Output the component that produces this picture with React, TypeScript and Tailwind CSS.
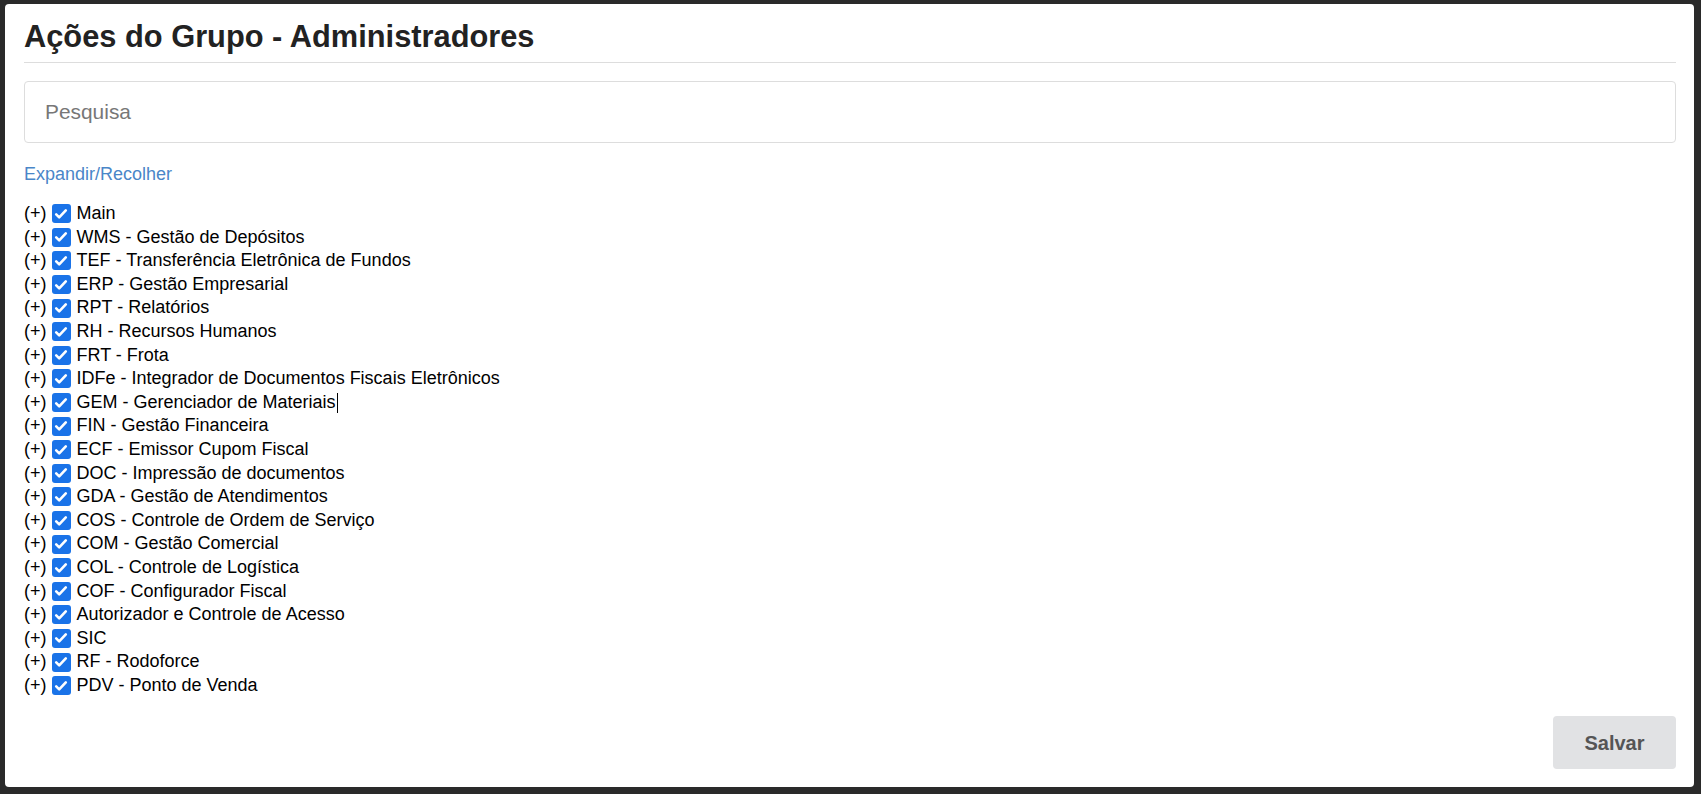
const modules = [
  "Main",
  "WMS - Gestão de Depósitos",
  "TEF - Transferência Eletrônica de Fundos",
  "ERP - Gestão Empresarial",
  "RPT - Relatórios",
  "RH - Recursos Humanos",
  "FRT - Frota",
  "IDFe - Integrador de Documentos Fiscais Eletrônicos",
  "GEM - Gerenciador de Materiais",
  "FIN - Gestão Financeira",
  "ECF - Emissor Cupom Fiscal",
  "DOC - Impressão de documentos",
  "GDA - Gestão de Atendimentos",
  "COS - Controle de Ordem de Serviço",
  "COM - Gestão Comercial",
  "COL - Controle de Logística",
  "COF - Configurador Fiscal",
  "Autorizador e Controle de Acesso",
  "SIC",
  "RF - Rodoforce",
  "PDV - Ponto de Venda",
];

function CheckBox() {
  return (
    <span className="inline-flex size-[19px] items-center justify-center rounded-[3px] bg-[#1a73e8]">
      <svg viewBox="0 0 16 16" className="size-[16px]" fill="none">
        <path
          d="M3.2 8.4l3 3L12.8 4.4"
          stroke="white"
          strokeWidth="2.6"
          strokeLinecap="round"
          strokeLinejoin="round"
        />
      </svg>
    </span>
  );
}

export default function App() {
  return (
    <div className="min-h-screen bg-[#2a2a2a] pt-[4px] pl-[5px] pr-[7px] pb-[7px] font-['Liberation_Sans',Arial,sans-serif]">
      <div className="flex h-[783px] flex-col rounded-[4px] bg-white pt-[18px] pl-[19px] pr-[18px] pb-[18px]">
        <h2 className="border-b border-[#dddddd] pb-[10px] text-[30.8px] font-bold leading-[30px] text-[#222]">
          Ações do Grupo - Administradores
        </h2>

        <div className="mt-[18px] flex h-[62px] items-center rounded-[4px] border border-[#dddddd] pl-[20px]">
          <input
            placeholder="Pesquisa"
            className="w-full bg-transparent text-[20.9px] text-black outline-none placeholder:text-[#777]"
          />
        </div>

        <a
          href="#"
          className="mt-[20px] self-start text-[18px] leading-[22px] text-[#4a86c8]"
        >
          Expandir/Recolher
        </a>

        <ul className="mt-[17px] text-[18px] leading-[23.6px] text-black">
          {modules.map((m) => (
            <li key={m} className="flex h-[23.6px] items-center">
              <span>(+)</span>
              <span className="ml-[5px] mr-[6px] flex">
                <CheckBox />
              </span>
              <span>{m}</span>
              {m.startsWith("GEM") && (
                <span className="ml-[1px] inline-block h-[20px] w-px bg-black" />
              )}
            </li>
          ))}
        </ul>

        <div className="mt-auto flex justify-end">
          <button className="h-[53px] w-[123px] rounded-[4px] bg-[#e1e2e4] text-[20px] font-bold text-[#555]">
            Salvar
          </button>
        </div>
      </div>
    </div>
  );
}
